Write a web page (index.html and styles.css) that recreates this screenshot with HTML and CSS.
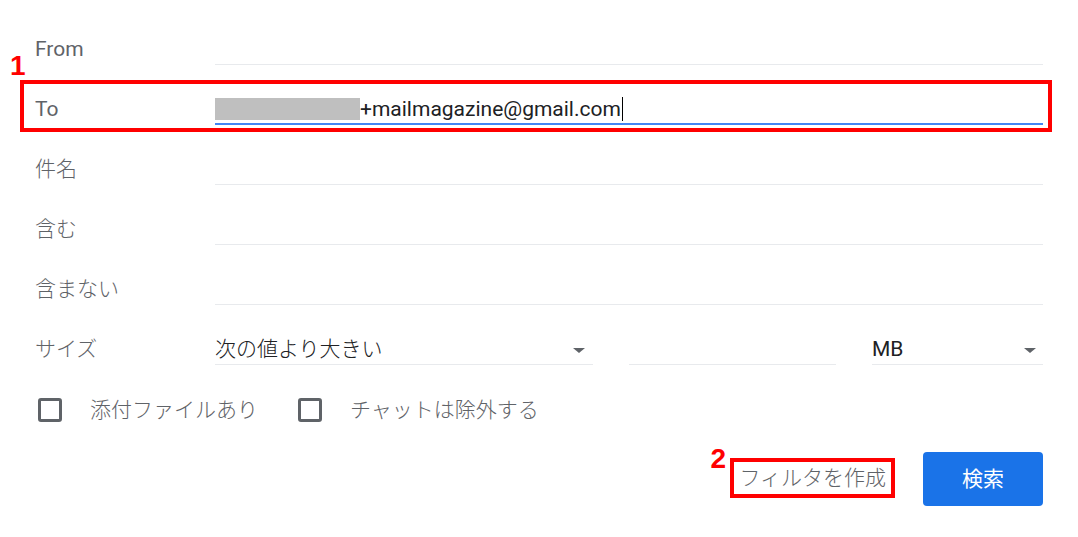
FILE: index.html
```html
<!DOCTYPE html>
<html lang="ja">
<head>
<meta charset="utf-8">
<title>検索オプション</title>
<link rel="stylesheet" href="styles.css">
</head>
<body>
<div class="form">
  <div class="row">
    <div class="label">From</div>
    <div class="field"></div>
  </div>
  <div class="row">
    <span class="num num1">1</span>
    <span class="hl hl1"></span>
    <div class="label">To</div>
    <div class="field active"><span class="mask"></span>+mailmagazine@gmail.com<span class="caret"></span></div>
  </div>
  <div class="row">
    <div class="label ja">件名</div>
    <div class="field"></div>
  </div>
  <div class="row">
    <div class="label ja">含む</div>
    <div class="field"></div>
  </div>
  <div class="row">
    <div class="label ja">含まない</div>
    <div class="field"></div>
  </div>
  <div class="row">
    <div class="label ja">サイズ</div>
    <div class="size">
      <div class="field select sel1"><span class="ja">次の値より大きい</span><span class="arrow"></span></div>
      <div class="field num-in"></div>
      <div class="field select sel2">MB<span class="arrow"></span></div>
    </div>
  </div>
  <div class="checks">
    <label class="check"><span class="box"></span><span class="ctext ja">添付ファイルあり</span></label>
    <label class="check"><span class="box"></span><span class="ctext ja">チャットは除外する</span></label>
  </div>
  <div class="actions">
    <span class="filter ja">フィルタを作成<span class="hl hl2"></span><span class="num num2">2</span></span>
    <button class="search">検索</button>
  </div>
</div>
</body>
</html>
```

FILE: styles.css
```css
html, body {
  margin: 0;
  padding: 0;
  background: #ffffff;
}
body {
  font-family: Roboto, "Noto Sans CJK JP", sans-serif;
  font-size: 21px;
  color: #202124;
}
.ja {
  font-weight: 300;
}
.form {
  padding-top: 5px;
}
.row {
  position: relative;
  display: flex;
  align-items: flex-end;
  height: 60px;
  padding: 0 35px;
}
.label {
  width: 180px;
  flex: none;
  color: #5f6368;
  line-height: 30px;
  padding-bottom: 1px;
}
.field {
  flex: 1;
  height: 30px;
  line-height: 30px;
  border-bottom: 1px solid #e8eaed;
  white-space: nowrap;
  position: relative;
}
.field.active {
  height: 29px;
  border-bottom: 2px solid #4285f4;
}
.mask {
  display: inline-block;
  width: 145px;
  height: 22px;
  background: #bfbfbf;
  vertical-align: -4px;
}
.caret {
  display: inline-block;
  width: 1px;
  height: 24px;
  background: #000;
  vertical-align: -5px;
  margin-left: 1px;
}
.size {
  flex: 1;
  display: flex;
  gap: 36px;
}
.sel1 {
  flex: none;
  width: 378px;
}
.num-in {
  flex: none;
  width: 207px;
}
.sel2 {
  flex: 1;
}
.arrow {
  position: absolute;
  right: 8px;
  top: 14px;
  width: 0;
  height: 0;
  border-left: 6px solid transparent;
  border-right: 6px solid transparent;
  border-top: 5px solid #5f6368;
}
.sel2 .arrow {
  right: 7px;
}
.checks {
  display: flex;
  align-items: center;
  gap: 40px;
  margin-top: 33px;
  padding-left: 38px;
  height: 24px;
}
.check {
  display: flex;
  align-items: center;
  gap: 28px;
  color: #5f6368;
}
.box {
  width: 18px;
  height: 18px;
  border: 3px solid #5f6368;
  border-radius: 3px;
}
.ctext {
  line-height: 24px;
}
.actions {
  display: flex;
  justify-content: flex-end;
  align-items: center;
  margin-top: 30px;
  padding-right: 35px;
}
.filter {
  position: relative;
  color: #5f6368;
  line-height: 30px;
  margin-right: 37px;
  margin-bottom: 3px;
}
.search {
  width: 120px;
  height: 54px;
  border: none;
  border-radius: 4px;
  background: #1a73e8;
  color: #ffffff;
  font-family: Roboto, "Noto Sans CJK JP", sans-serif;
  font-size: 21px;
  padding: 0 0 4px;
}
.hl {
  position: absolute;
  border: 4px solid #ff0000;
  box-sizing: border-box;
  pointer-events: none;
}
.hl1 {
  left: 20px;
  top: 15px;
  width: 1032px;
  height: 52px;
}
.hl2 {
  left: -9px;
  right: -9px;
  top: -5px;
  bottom: -5px;
}
.num {
  position: absolute;
  font-family: "Liberation Sans", Arial, sans-serif;
  font-weight: bold;
  font-size: 28px;
  line-height: 28px;
  color: #ff0000;
}
.num1 {
  left: 10px;
  top: -13px;
}
.num2 {
  left: -29px;
  top: -18px;
}
```
